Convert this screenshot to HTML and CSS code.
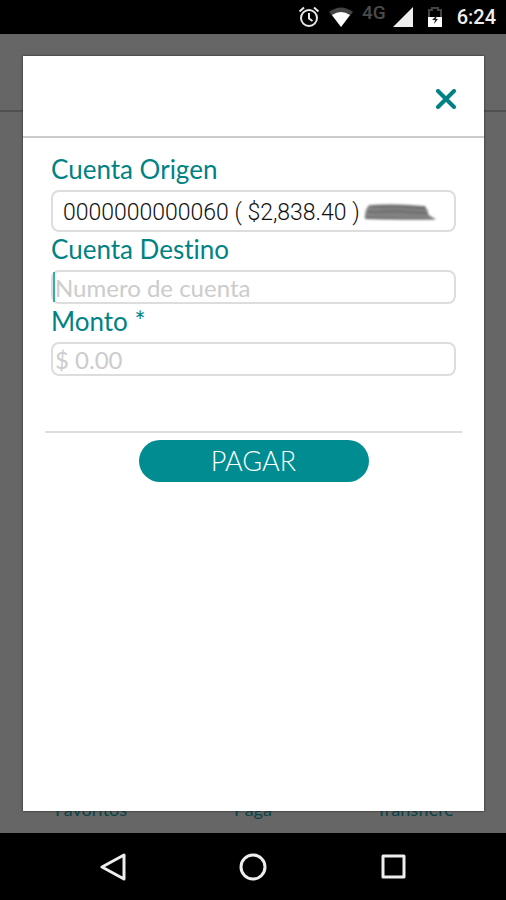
FILE: index.html
```html
<!DOCTYPE html>
<html lang="es">
<head>
    <meta charset="UTF-8">
    <meta name="viewport" content="width=device-width, initial-scale=1.0">
    <title>Pagar</title>
    <link rel="stylesheet" href="styles.css">
</head>
<body>
    <header class="status">
        <svg class="alarm" width="22" height="22" viewBox="0 0 22 22" fill="none" stroke="#e8e8e8" stroke-width="2">
            <circle cx="11" cy="12" r="8"/>
            <path d="M11 7v5.500l3.500 2.500M1.500 5.500l4.500-4M20.500 5.500l-4.500-4"/>
        </svg>
        <svg class="wifi" width="24" height="20" viewBox="0 0 24 20">
            <path d="M0 5Q12-4 24 5L12 20z" fill="#444"/>
            <path d="M3 8Q12 2 21 8L12 20z" fill="#fff"/>
        </svg>
        <span class="net">4G</span>
        <svg class="signal" width="20" height="20" viewBox="0 0 20 20"><path d="M20 0v20H0z" fill="#eee"/></svg>
        <svg class="battery" width="14" height="20" viewBox="0 0 14 20">
            <path d="M1 10V3h3V1h6v2h3v7" fill="none" stroke="#444" stroke-width="2"/>
            <path d="M0 10h14v10H0z" fill="#fff"/>
            <path d="M9 8l-5 5h3l-1 4 4-5H8z" fill="#222"/>
        </svg>
        <span class="clock">6:24</span>
    </header>

    <main class="screen">
        <div class="app-bar"></div>
        <nav class="tabs">
            <a href="#">Favoritos</a>
            <a href="#">Paga</a>
            <a href="#">Transfiere</a>
        </nav>

        <section class="modal">
            <div class="modal-head">
                <button class="close" type="button" aria-label="Cerrar">
                    <svg width="20" height="20" viewBox="0 0 20 20"><path d="M2 2l16 16M18 2L2 18" stroke="#008285" stroke-width="4" stroke-linecap="round"/></svg>
                </button>
            </div>
            <form class="pay">
                <label for="origen">Cuenta Origen</label>
                <div class="field">
                    <select id="origen">
                        <option>0000000000060 ( $2,838.40 )</option>
                    </select>
                    <svg class="scribble" width="72" height="18" viewBox="0 0 72 18">
                        <path d="M5 2Q30 0 61 3L65 12 71 16Q40 17 1 16Q0 8 5 2z" fill="#858585"/>
                        <path d="M8 4Q35 2 62 5M4 9q30-2 60 1M2 15q34 1 69 1" fill="none" stroke="#555" stroke-width="1"/>
                        <path d="M18 6q22-1 46 1M10 12q25-2 54 0" fill="none" stroke="#777" stroke-width="1"/>
                    </svg>
                </div>
                <label for="destino">Cuenta Destino</label>
                <div class="field">
                    <input id="destino" type="text" placeholder="Numero de cuenta">
                    <span class="caret"></span>
                </div>
                <label for="monto">Monto *</label>
                <div class="field">
                    <input id="monto" type="text" placeholder="$ 0.00">
                </div>
                <div class="actions">
                    <button class="pagar" type="button">PAGAR</button>
                </div>
            </form>
        </section>
    </main>

    <footer class="navbar">
        <button type="button" aria-label="Atrás">
            <svg width="28" height="28" viewBox="0 0 28 28"><path d="M25 2v24L3 14z"/></svg>
        </button>
        <button type="button" aria-label="Inicio">
            <svg width="28" height="28" viewBox="0 0 28 28"><circle cx="14" cy="14" r="12"/></svg>
        </button>
        <button type="button" aria-label="Recientes">
            <svg width="28" height="28" viewBox="0 0 28 28"><rect x="4" y="3" width="21" height="21"/></svg>
        </button>
    </footer>
</body>
</html>
```

FILE: styles.css
```css
*{
    box-sizing: border-box;
}
body{
    margin: 0;
    min-height: 100vh;
    display: flex;
    flex-direction: column;
    background: #000;
    font-family: Lato, "Liberation Sans", sans-serif;
    font-variant-ligatures: none;
}
button{
    padding: 0;
    border: 0;
    background: none;
}
svg{
    display: block;
}

/* status bar */
.status{
    height: 34px;
    padding-right: 10px;
    display: flex;
    justify-content: flex-end;
    align-items: center;
    font-family: Roboto, sans-serif;
}
.wifi{
    margin-left: 9px;
}
.net{
    margin: 0 7px 8px 9px;
    color: #4a4a4a;
    font-size: 19px;
    font-weight: 500;
    line-height: 20px;
}
.battery{
    margin: 0 15px;
}
.clock{
    color: #eee;
    font-size: 20px;
    font-weight: 500;
}

/* dimmed page */
.screen{
    position: relative;
    flex: 1;
    display: flex;
    flex-direction: column;
    justify-content: space-between;
    background: #666;
}
.app-bar{
    height: 78px;
    border-bottom: 2px solid #505050;
}
.tabs{
    display: flex;
    padding: 0 10px 14px;
}
.tabs a{
    flex: 1;
    color: #0a4444;
    font-size: 18px;
    line-height: 20px;
    text-align: center;
    text-decoration: none;
}

/* modal */
.modal{
    position: absolute;
    inset: 22px 22px 22px 23px;
    background: #fff;
    box-shadow: 0 0 2px #222;
}
.modal-head{
    height: 82px;
    padding: 6px 28px 0 0;
    display: flex;
    justify-content: flex-end;
    align-items: center;
    border-bottom: 2px solid #ccc;
}
.pay{
    padding: 14px 28px;
}
.pay label{
    display: block;
    padding-bottom: 4px;
    color: #008285;
    font-size: 26px;
    line-height: 34px;
}
.field{
    position: relative;
}
.field input,
.field select{
    display: block;
    width: 100%;
    border: 2px solid #ddd;
    border-radius: 8px;
    background: #fff;
    outline: 0;
}
.field select{
    height: 42px;
    padding: 2px 10px 0;
    appearance: none;
    color: #111;
    font: 300 23px Roboto, sans-serif;
}
.field input{
    height: 34px;
    padding: 0 2px;
    font: 24px Lato, sans-serif;
}
.field input::placeholder{
    color: #ccc;
}
.scribble{
    position: absolute;
    top: 13px;
    right: 20px;
    filter: blur(1px);
}
.caret{
    position: absolute;
    top: 2px;
    left: 2px;
    width: 2px;
    height: 30px;
    background: #30b0a8;
}
.actions{
    margin: 55px -6px 0;
    padding-top: 7px;
    border-top: 2px solid #ddd;
    text-align: center;
}
.pagar{
    width: 230px;
    height: 42px;
    padding-bottom: 2px;
    border-radius: 21px;
    background: #008c90;
    color: #fff;
    font: 300 27px Lato, sans-serif;
}

/* android buttons */
.navbar{
    height: 67px;
    padding: 0 43px;
    display: flex;
    justify-content: space-around;
    align-items: center;
}
.navbar svg{
    fill: none;
    stroke: #eee;
    stroke-width: 3;
    stroke-linejoin: round;
}
```
